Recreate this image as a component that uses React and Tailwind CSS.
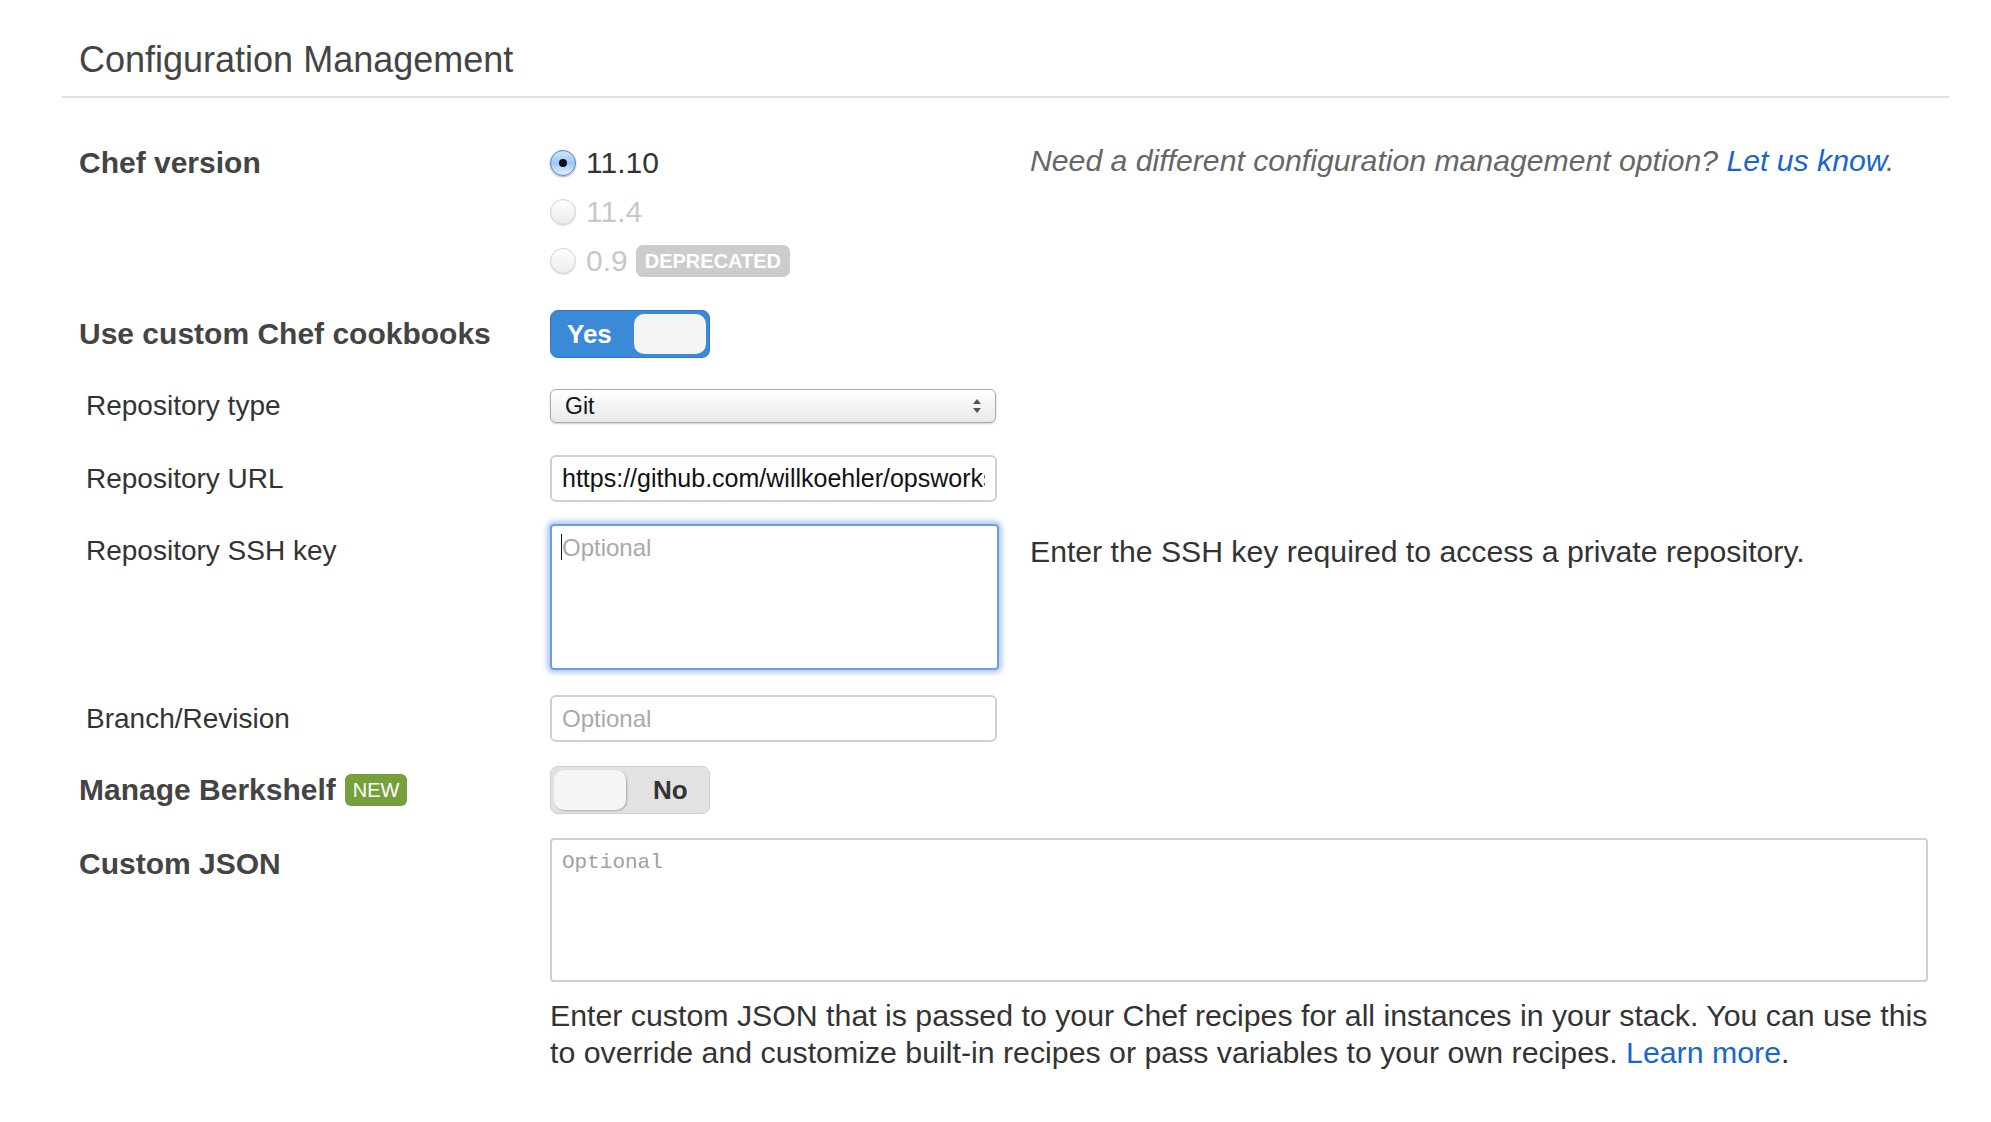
import React from 'react';

const Radio = ({ checked, disabled, label, children }) => (
  <label className="flex h-[49px] items-center">
    {checked ? (
      <span className="flex h-[26px] w-[26px] items-center justify-center rounded-full border border-[#5d82b3] bg-linear-to-b from-[#cfe5fb] via-[#9cc8f4] to-[#e3f1ff] shadow-[0_1px_2px_rgba(0,0,0,0.35)]">
        <span className="h-[8px] w-[8px] rounded-full bg-[#111]" />
      </span>
    ) : (
      <span className="h-[26px] w-[26px] rounded-full border border-[#d2d2d2] bg-linear-to-b from-[#ffffff] to-[#ebebeb] shadow-[0_1px_1px_rgba(0,0,0,0.12)]" />
    )}
    <span className={`ml-[10px] text-[30px] ${disabled ? 'text-[#c8c8c8]' : 'text-[#333]'}`}>{label}</span>
    {children}
  </label>
);

const App = () => {
  return (
    <main className="min-h-screen bg-white pl-[62px] pr-[42px] pt-[38px] font-['Liberation_Sans',Arial,sans-serif] text-[#333]">
      <h1 className="pl-[17px] text-[36px] leading-[44px] text-[#444]">Configuration Management</h1>
      <div className="mt-[14px] h-[2px] bg-[#e1e1e1]" />

      <div className="pl-[17px]">
        {/* Chef version */}
        <div className="mt-[40px] flex">
          <div className="w-[471px] shrink-0 text-[30px] font-bold leading-[49px] text-[#444]">Chef version</div>
          <div className="w-[449px] shrink-0">
            <Radio checked label="11.10" />
            <Radio disabled label="11.4" />
            <Radio disabled label="0.9">
              <span className="ml-[8px] flex h-[32px] items-center rounded-[7px] bg-[#cccccc] px-[9px] text-[20px] font-bold text-white">
                DEPRECATED
              </span>
            </Radio>
          </div>
          <p className="ml-[31px] -mt-[2px] text-[30.2px] italic leading-[49px] text-[#666]">
            Need a different configuration management option?{' '}
            <a href="#" className="text-[#1a66cc]">Let us know</a>.
          </p>
        </div>

        {/* Custom cookbooks */}
        <div className="mt-[25px] flex items-center">
          <div className="w-[471px] shrink-0 text-[30px] font-bold leading-none text-[#444]">Use custom Chef cookbooks</div>
          <div className="flex h-[48px] w-[160px] items-center rounded-[8px] border border-[#2f78c4] bg-[#3a8ad9] pl-[16px] pr-[3px]">
            <span className="flex-1 text-[26px] font-bold text-white">Yes</span>
            <span className="h-[40px] w-[72px] rounded-[10px] bg-[#f4f4f4]" />
          </div>
        </div>

        {/* Repository type */}
        <div className="mt-[31px] flex items-center">
          <div className="w-[471px] shrink-0 pl-[7px] text-[28px] leading-none">Repository type</div>
          <div className="flex h-[34px] w-[446px] items-center justify-between rounded-[6px] border border-[#a9a9a9] bg-linear-to-b from-[#ffffff] to-[#e9e9e9] pl-[14px] pr-[13px] shadow-[0_1px_2px_rgba(0,0,0,0.2)]">
            <span className="text-[23px] leading-none text-[#111]">Git</span>
            <svg width="10" height="18" viewBox="0 0 10 18">
              <path d="M5 2 L9 7 L1 7 Z" fill="#555" />
              <path d="M5 16 L9 11 L1 11 Z" fill="#555" />
            </svg>
          </div>
        </div>

        {/* Repository URL */}
        <div className="mt-[32px] flex items-center">
          <div className="w-[471px] shrink-0 pl-[7px] text-[28px] leading-none">Repository URL</div>
          <input
            readOnly
            value="https://github.com/willkoehler/opsworks-cookbooks"
            className="h-[47px] w-[447px] rounded-[6px] border-2 border-[#d0d0d0] px-[10px] text-[25px] text-[#111] outline-none"
          />
        </div>

        {/* SSH key */}
        <div className="mt-[22px] flex items-start">
          <div className="w-[471px] shrink-0 pl-[7px] text-[28px] leading-[54px]">Repository SSH key</div>
          <div className="relative shrink-0">
            <textarea
              placeholder="Optional"
              className="block h-[146px] w-[449px] resize-none rounded-[4px] border-2 border-[#6f9fd9] px-[10px] py-[6px] text-[24px] leading-[32px] shadow-[0_0_5px_3px_rgba(90,150,230,0.5)] outline-none placeholder:text-[#a9a9a9]"
            />
            <span className="absolute left-[11px] top-[10px] h-[26px] w-[1px] bg-[#111]" />
          </div>
          <p className="ml-[31px] text-[30.2px] leading-[56px] text-[#333]">
            Enter the SSH key required to access a private repository.
          </p>
        </div>

        {/* Branch */}
        <div className="mt-[25px] flex items-center">
          <div className="w-[471px] shrink-0 pl-[7px] text-[28px] leading-none">Branch/Revision</div>
          <input
            placeholder="Optional"
            className="h-[47px] w-[447px] rounded-[6px] border-2 border-[#d0d0d0] px-[10px] text-[24px] outline-none placeholder:text-[#a9a9a9]"
          />
        </div>

        {/* Berkshelf */}
        <div className="mt-[24px] flex items-center">
          <div className="flex w-[471px] shrink-0 items-center text-[30px] font-bold leading-none text-[#444]">
            Manage Berkshelf
            <span className="ml-[9px] flex h-[32px] items-center rounded-[6px] bg-[#76a03c] px-[8px] text-[20px] font-normal text-white">
              NEW
            </span>
          </div>
          <div className="flex h-[48px] w-[160px] items-center rounded-[8px] border border-[#cfcfcf] bg-[#e2e2e2] pl-[3px]">
            <span className="h-[40px] w-[72px] rounded-[10px] bg-[#f5f5f5] shadow-[1px_1px_2px_rgba(0,0,0,0.25)]" />
            <span className="ml-[27px] text-[26px] font-bold text-[#333]">No</span>
          </div>
        </div>

        {/* Custom JSON */}
        <div className="mt-[24px] flex items-start">
          <div className="w-[471px] shrink-0 text-[30px] font-bold leading-[52px] text-[#444]">Custom JSON</div>
          <textarea
            placeholder="Optional"
            className="block h-[144px] w-[1378px] resize-none rounded-[4px] border-2 border-[#d0d0d0] px-[10px] py-[8px] font-['Liberation_Mono',monospace] text-[21px] leading-[30px] outline-none placeholder:text-[#a0a0a0]"
          />
        </div>
        <p className="ml-[471px] mt-[15px] whitespace-nowrap text-[30.3px] leading-[37px] text-[#333]">
          Enter custom JSON that is passed to your Chef recipes for all instances in your stack. You can use this
          <br />
          to override and customize built-in recipes or pass variables to your own recipes.{' '}
          <a href="#" className="text-[#1a66cc]">Learn more</a>.
        </p>
      </div>
    </main>
  );
};

export default App;
